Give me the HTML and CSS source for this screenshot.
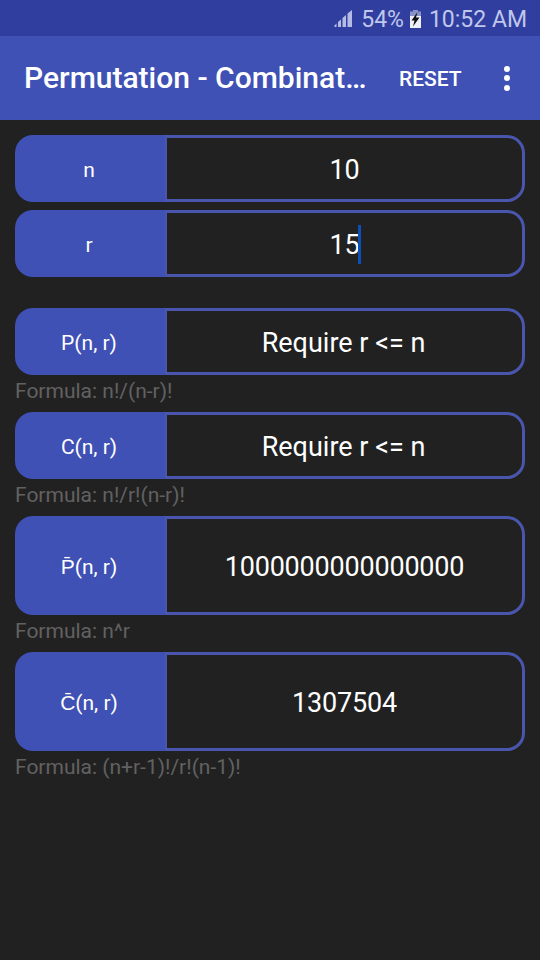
FILE: index.html
```html
<!DOCTYPE html>
<html lang="en">
<head>
<meta charset="utf-8">
<title>Permutation - Combination</title>
<link rel="stylesheet" href="styles.css">
</head>
<body>
<div class="status">
  <svg class="signal" width="19" height="18" viewBox="0 0 19 18">
    <path d="M0.500 15.500 L2.500 13.500 V17 H0.500 Z" fill="#b4bce6"/>
    <path d="M4 12 L7 9.500 V17 H4 Z" fill="#b4bce6"/>
    <path d="M8.500 8 L12 5 V17 H8.500 Z" fill="#b4bce6"/>
    <path d="M13.500 3.500 L18 0 V17 H13.500 Z" fill="#b4bce6"/>
  </svg>
  <span class="pct">54%</span>
  <svg class="batt" width="13" height="18" viewBox="0 0 13 18">
    <rect x="4" y="0" width="5" height="2" fill="#8a93c8"/>
    <rect x="1" y="1.500" width="11" height="5" fill="#8a93c8"/>
    <rect x="1" y="6" width="11" height="12" fill="#eef0fa"/>
    <path d="M8.500 2 L2.500 10.500 H5.500 L4 16.500 L10.500 7.500 H7 Z" fill="#111"/>
  </svg>
  <span class="clock">10:52 AM</span>
</div>
<header class="bar">
  <h1 class="title">Permutation - Combinat…</h1>
  <span class="reset">RESET</span>
  <span class="more"><i></i><i></i><i></i></span>
</header>
<main class="content">
  <div class="row"><div class="key">n</div><div class="val num">10</div></div>
  <div class="row r2"><div class="key">r</div><div class="val num"><span class="caret-wrap">15<b class="caret"></b></span></div></div>
  <div class="row first"><div class="key">P(n, r)</div><div class="val">Require r &lt;= n</div></div>
  <div class="formula">Formula: n!/(n-r)!</div>
  <div class="row"><div class="key">C(n, r)</div><div class="val">Require r &lt;= n</div></div>
  <div class="formula">Formula: n!/r!(n-r)!</div>
  <div class="row tall"><div class="key">P̄(n, r)</div><div class="val num">1000000000000000</div></div>
  <div class="formula">Formula: n^r</div>
  <div class="row tall"><div class="key">C̄(n, r)</div><div class="val num">1307504</div></div>
  <div class="formula">Formula: (n+r-1)!/r!(n-1)!</div>
</main>
</body>
</html>
```
FILE: styles.css
```css
* { box-sizing: border-box; }
html, body { margin: 0; padding: 0; }
body {
  width: 540px;
  height: 960px;
  overflow: hidden;
  background: #212121;
  font-family: Roboto, "Liberation Sans", sans-serif;
  color: #fff;
}
.status {
  height: 36px;
  background: #303f9f;
  display: flex;
  align-items: center;
  justify-content: flex-end;
  padding: 3px 13px 0 0;
  color: #c0c7ec;
  font-size: 23px;
}
.signal { margin: 0 8px 2px 0; }
.batt { margin: 0 7px 2px 5px; }
.bar {
  height: 84px;
  background: #3f51b5;
  display: flex;
  align-items: center;
  padding-left: 24px;
}
.title {
  margin: 0 0 2px;
  width: 375px;
  font-size: 30px;
  font-weight: 500;
  white-space: nowrap;
}
.reset {
  font-size: 21px;
  font-weight: 500;
  padding-top: 2px;
}
.more {
  margin-left: 42px;
  display: flex;
  flex-direction: column;
  gap: 3.500px;
}
.more i {
  width: 6px;
  height: 6px;
  border-radius: 50%;
  background: #fff;
}
.content {
  padding: 15px 15px 0;
}
.row {
  height: 67px;
  display: flex;
}
.r2 { margin-top: 8px; }
.first { margin-top: 31px; }
.tall { height: 99px; }
.key {
  width: 150px;
  background: #3f51b5;
  border-radius: 18px 0 0 18px;
  display: flex;
  align-items: center;
  justify-content: center;
  font-size: 21px;
  padding: 2px 2px 0 0;
}
.val {
  flex: 1;
  border: 3px solid #4a55ad;
  border-left-width: 2px;
  border-radius: 0 18px 18px 0;
  display: flex;
  align-items: center;
  justify-content: center;
  font-size: 27px;
  padding: 2px 2px 0 0;
}
.val.num {
  letter-spacing: -0.2px;
  padding-right: 0;
}
.caret-wrap { position: relative; }
.caret {
  position: absolute;
  left: calc(100% - 1px);
  top: -4px;
  width: 3px;
  height: 39px;
  background: #0d4fb8;
}
.formula {
  height: 37px;
  padding-top: 3px;
  font-size: 21px;
  line-height: 26px;
  color: #616161;
}
```
